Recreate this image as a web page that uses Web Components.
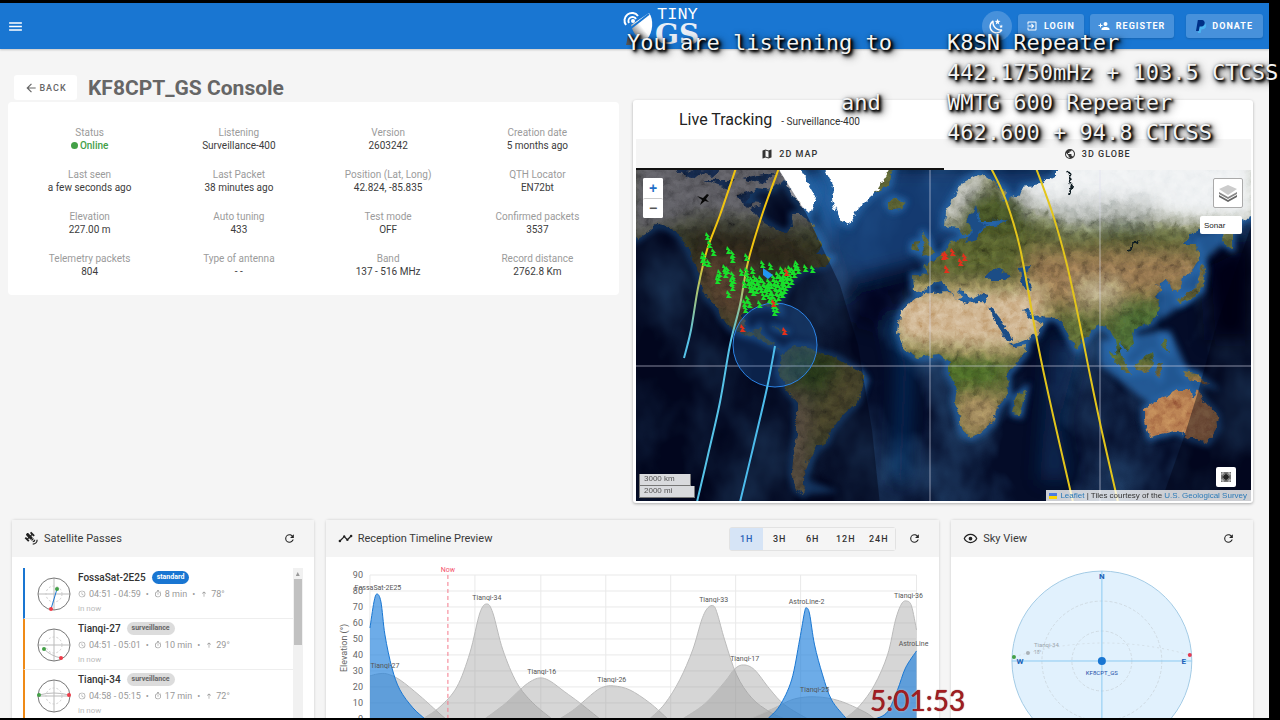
<!DOCTYPE html>
<html lang="en">
<head>
<meta charset="utf-8">
<title>KF8CPT_GS Console - TinyGS</title>
<style>
    * { box-sizing: border-box; }

    body {
        margin: 0;
        height: 100vh;
        padding: 3px 11px 2px 0;
        overflow: hidden;
        background: #000;
        font-family: Roboto, "Liberation Sans", sans-serif;
        font-size: 10px;
        color: #444;
    }
</style>
</head>
<body>
<tgs-app></tgs-app>
<stream-caption></stream-caption>
<stream-clock>5:01:53</stream-clock>

<script>
// Icon paths, 24x24
const ICONS = {
    menu: 'M3,6H21V8H3V6M3,11H21V13H3V11M3,16H21V18H3V16Z',
    back: 'M20,11V13H8L13.5,18.5L12.08,19.92L4.16,12L12.08,4.08L13.5,5.5L8,11H20Z',
    refresh: 'M17.65,6.35C16.2,4.9 14.21,4 12,4A8,8 0 0,0 4,12A8,8 0 0,0 12,20C15.73,20 18.84,17.45 19.73,14H17.65C16.83,16.33 14.61,18 12,18A6,6 0 0,1 6,12A6,6 0 0,1 12,6C13.66,6 15.14,6.69 16.22,7.78L13,11H20V4L17.65,6.35Z',
    map: 'M20.5,3L20.34,3.03L15,5.1L9,3L3.36,4.9C3.15,4.97 3,5.15 3,5.38V20.5A0.5,0.5 0 0,0 3.5,21L3.66,20.97L9,18.9L15,21L20.64,19.1C20.85,19.03 21,18.85 21,18.62V3.5A0.5,0.5 0 0,0 20.5,3M15,19L9,16.89V5L15,7.11V19Z',
    earth: 'M17.9,17.39C17.64,16.59 16.89,16 16,16H15V13A1,1 0 0,0 14,12H8V10H10A1,1 0 0,0 11,9V7H13A2,2 0 0,0 15,5V4.59C17.93,5.77 20,8.64 20,12C20,14.08 19.2,15.97 17.9,17.39M11,19.93C7.05,19.44 4,16.08 4,12C4,11.38 4.08,10.78 4.21,10.21L9,15V16A2,2 0 0,0 11,18M12,2A10,10 0 0,0 2,12A10,10 0 0,0 12,22A10,10 0 0,0 22,12A10,10 0 0,0 12,2Z',
    login: 'M19,3H5C3.89,3 3,3.89 3,5V9H5V5H19V19H5V15H3V19A2,2 0 0,0 5,21H19A2,2 0 0,0 21,19V5C21,3.89 20.1,3 19,3M10.08,15.58L11.5,17L16.5,12L11.5,7L10.08,8.41L12.67,11H3V13H12.67L10.08,15.58Z',
    register: 'M15,14C12.33,14 7,15.33 7,18V20H23V18C23,15.33 17.67,14 15,14M6,10V7H4V10H1V12H4V15H6V12H9V10M15,12A4,4 0 0,0 19,8A4,4 0 0,0 15,4A4,4 0 0,0 11,8A4,4 0 0,0 15,12Z',
    eye: 'M12,9A3,3 0 0,1 15,12A3,3 0 0,1 12,15A3,3 0 0,1 9,12A3,3 0 0,1 12,9M12,4.5C17,4.5 21.27,7.61 23,12C21.27,16.39 17,19.5 12,19.5C7,19.5 2.73,16.39 1,12C2.73,7.61 7,4.5 12,4.5M3.18,12C4.83,15.36 8.24,17.5 12,17.5C15.76,17.5 19.17,15.36 20.82,12C19.17,8.64 15.76,6.5 12,6.5C8.24,6.5 4.83,8.64 3.18,12Z',
    timeline: 'M3,14L3.5,14.07L8.07,9.5C7.89,8.85 8.06,8.11 8.59,7.59C9.37,6.8 10.63,6.8 11.41,7.59C11.94,8.11 12.11,8.85 11.93,9.5L14.5,12.07L15,12C15.18,12 15.35,12 15.5,12.07L19.07,8.5C19,8.35 19,8.18 19,8A2,2 0 0,1 21,6A2,2 0 0,1 23,8A2,2 0 0,1 21,10C20.82,10 20.65,10 20.5,9.93L16.93,13.5C17,13.65 17,13.82 17,14A2,2 0 0,1 15,16A2,2 0 0,1 13,14L13.07,13.5L10.5,10.93C10.18,11 9.82,11 9.5,10.93L4.93,15.5L5,16A2,2 0 0,1 3,18A2,2 0 0,1 1,16A2,2 0 0,1 3,14Z',
    satellite: 'M11.62,1L17.28,6.67L15.16,8.79L13.04,6.67L11.62,8.09L13.95,10.41L12.79,11.58L13.24,12.04C14.17,11.61 15.31,11.77 16.07,12.54L12.54,16.07C11.77,15.31 11.61,14.17 12.04,13.24L11.58,12.79L10.41,13.95L8.09,11.62L6.67,13.04L8.79,15.16L6.67,17.28L1,11.62L3.14,9.5L5.26,11.62L6.67,10.21L3.84,7.38C3.06,6.6 3.06,5.33 3.84,4.55L4.55,3.84C5.33,3.06 6.6,3.06 7.38,3.84L10.21,6.67L11.62,5.26L9.5,3.14L11.62,1M18,14A4,4 0 0,1 14,18V16A2,2 0 0,0 16,14H18M22,14A8,8 0 0,1 14,22V20A6,6 0 0,0 20,14H22Z',
    night: 'M17.75,4.09L15.22,6.03L16.13,9.09L13.5,7.28L10.87,9.09L11.78,6.03L9.25,4.09L12.44,4L13.5,1L14.56,4L17.75,4.09M21.25,11L19.61,12.25L20.2,14.23L18.5,13.06L16.8,14.23L17.39,12.25L15.75,11L17.81,10.95L18.5,9L19.19,10.95L21.25,11M18.97,15.95C19.8,15.87 20.69,17.05 20.16,17.8C19.84,18.25 19.5,18.67 19.08,19.07C15.17,23 8.84,23 4.94,19.07C1.03,15.17 1.03,8.83 4.94,4.93C5.34,4.53 5.76,4.17 6.21,3.85C6.96,3.32 8.14,4.21 8.06,5.04C7.79,7.9 8.75,10.87 10.95,13.06C13.14,15.26 16.1,16.22 18.97,15.95M17.33,17.97C14.5,17.81 11.7,16.64 9.53,14.5C7.36,12.31 6.2,9.5 6.04,6.68C3.23,9.82 3.34,14.64 6.35,17.66C9.37,20.67 14.19,20.78 17.33,17.97Z',
    clock: 'M12,20A8,8 0 0,0 20,12A8,8 0 0,0 12,4A8,8 0 0,0 4,12A8,8 0 0,0 12,20M12,2A10,10 0 0,1 22,12A10,10 0 0,1 12,22C6.47,22 2,17.5 2,12A10,10 0 0,1 12,2M12.5,7V12.25L17,14.92L16.25,16.15L11,13V7H12.5Z',
    timer: 'M12,20A7,7 0 0,1 5,13A7,7 0 0,1 12,6A7,7 0 0,1 19,13A7,7 0 0,1 12,20M19.03,7.39L20.45,5.97C20,5.46 19.55,5 19.04,4.56L17.62,6C16.07,4.74 14.12,4 12,4A9,9 0 0,0 3,13A9,9 0 0,0 12,22C17,22 21,17.97 21,13C21,10.88 20.26,8.93 19.03,7.39M11,14H13V8H11M15,1H9V3H15V1Z',
    up: 'M13,20H11V8L7.5,11.5L6.1,10.1L12,4.2L17.9,10.1L16.5,11.5L13,8V20Z'
};

// Smooth curve through a flat list of x,y pairs
function curve(list) {
    const p = [];
    for (let i = 0; i < list.length; i += 2) p.push([list[i], list[i + 1]]);
    let d = `M${p[0]}`;
    for (let i = 0; i < p.length - 1; i++) {
        const a = p[i - 1] || p[i], b = p[i], c = p[i + 1], e = p[i + 2] || c;
        d += `C${b[0] + (c[0] - a[0]) / 6},${b[1] + (c[1] - a[1]) / 6} ${c[0] - (e[0] - b[0]) / 6},${c[1] - (e[1] - b[1]) / 6} ${c[0]},${c[1]}`;
    }
    return d;
}

class TgsIcon extends HTMLElement {
    connectedCallback() {
        if (this.shadowRoot) return;
        this.attachShadow({ mode: 'open' }).innerHTML = `
            <style>
                :host { display: inline-block; width: var(--icon-size, 14px); height: var(--icon-size, 14px); flex: none; }
                svg { display: block; width: 100%; height: 100%; fill: currentColor; }
            </style>
            <svg viewBox="0 0 24 24" aria-hidden="true"><path d="${ICONS[this.getAttribute('name')]}"/></svg>
        `;
    }
}

class TgsToolbar extends HTMLElement {
    constructor() {
        super();
        this.attachShadow({ mode: 'open' }).innerHTML = `
            <style>
                :host {
                    display: grid;
                    grid-template-columns: 623fr 646fr;
                    align-items: center;
                    height: 46px;
                    background: #1976d2;
                    color: #fff;
                    box-shadow: 0 1px 2px rgba(0, 0, 0, .2);
                }
                button {
                    display: flex;
                    align-items: center;
                    justify-content: center;
                    border: 0;
                    padding: 0;
                    color: #fff;
                    background: rgba(255, 255, 255, .2);
                    font: 700 9px Roboto, sans-serif;
                    letter-spacing: 1px;
                }
                .menu { margin-left: 6px; width: 18px; height: 24px; background: none; --icon-size: 17px; }
                .right { display: flex; align-items: center; padding-right: 6px; }
                .brand { display: flex; align-self: start; height: 38px; }
                .brand > svg { width: 34px; height: 38px; }
                .words { display: flex; flex-direction: column; gap: 2px; padding-top: 2px; }
                .tiny { font: 17px/12px "Liberation Mono", monospace; }
                .gs { font: 700 28px/24px "DejaVu Serif", serif; margin-left: -2px; color: #e8eef6; }
                .actions { display: flex; align-items: center; margin-left: auto; gap: 6px; }
                .round { width: 30px; height: 30px; border-radius: 50%; --icon-size: 17px; }
                .pill { height: 24px; border-radius: 3px; gap: 6px; padding: 0 9px 0 8px; --icon-size: 12px; box-shadow: 0 1px 2px rgba(0, 0, 0, .15); }
                .donate { margin-left: 6px; padding: 0 10px; gap: 5px; }
            </style>
            <div><button class="menu" aria-label="Menu"><tgs-icon name="menu"></tgs-icon></button></div>
            <div class="right">
                <div class="brand">
                    <svg viewBox="0 0 34 38" aria-hidden="true">
                        <defs><linearGradient id="g" x1="1" y1="0" x2="0" y2="1"><stop offset="0" stop-color="#fff"/><stop offset=".5" stop-color="#fff"/><stop offset="1" stop-color="#444"/></linearGradient></defs>
                        <path d="M8,18L26,6C31,12 30,26 24,32C18,35 10,28 8,18Z" fill="url(#g)"/>
                        <path d="M26,7L8,21" stroke="#1976d2" stroke-width="2"/>
                        <path d="M5,29L12,32L8,38H3Z" fill="#555"/>
                        <g fill="none" stroke="#fff" stroke-width="2"><path d="M3,18A7,7 0 1,1 15,9"/><path d="M6,16A4,4 0 1,1 13,12"/></g>
                        <circle cx="10" cy="14" r="2" fill="#fff"/>
                    </svg>
                    <div class="words"><span class="tiny">TINY</span><span class="gs">GS</span></div>
                </div>
                <div class="actions">
                    <button class="round" aria-label="Theme"><tgs-icon name="night"></tgs-icon></button>
                    <button class="pill"><tgs-icon name="login"></tgs-icon>LOGIN</button>
                    <button class="pill"><tgs-icon name="register"></tgs-icon>REGISTER</button>
                    <button class="pill donate">
                        <svg width="11" height="13" viewBox="0 0 12 14" aria-hidden="true"><path d="M4,3H9C12,4 12,10 7,10H6L5,14H2Z" fill="#4ab3f0"/><path d="M2,0H7C11,1 10,7 6,7H4L3,12H0Z" fill="#003087"/></svg>
                        DONATE
                    </button>
                </div>
            </div>
        `;
    }
}

// Label over value, one cell of the station card
class TgsStat extends HTMLElement {
    constructor() {
        super();
        this.attachShadow({ mode: 'open' }).innerHTML = `
            <style>
                :host { display: block; text-align: center; font-size: 10px; line-height: 13px; padding: 8px 0; }
                .label { color: #9b9b9b; }
                .value { color: #3c3c3c; }
            </style>
            <div class="label"><slot name="label"></slot></div>
            <div class="value"><slot></slot></div>
        `;
    }
}

class TgsPanel extends HTMLElement {
    constructor() {
        super();
        this.attachShadow({ mode: 'open' }).innerHTML = `
            <style>
                :host { display: block; background: #fff; border-radius: 3px; box-shadow: 0 0 3px rgba(0, 0, 0, .18); min-width: 0; }
                header { display: flex; align-items: center; height: 37px; padding: 0 18px 0 12px; background: #f4f4f4; color: #222; --icon-size: 15px; }
                h2 { margin: 0 auto 0 5px; font: 400 11px Roboto, sans-serif; color: #3a3a3a; }
                button { display: flex; border: 0; background: none; padding: 0; color: #222; --icon-size: 13px; }
                ::slotted([slot=tools]) { margin-right: 12px; }
            </style>
            <header>
                <tgs-icon name="${this.getAttribute('icon')}"></tgs-icon>
                <h2>${this.getAttribute('heading')}</h2>
                <slot name="tools"></slot>
                <button aria-label="Refresh"><tgs-icon name="refresh"></tgs-icon></button>
            </header>
            <slot></slot>
        `;
    }
}

class TgsPass extends HTMLElement {
    connectedCallback() {
        const a = name => this.getAttribute(name);
        const standard = a('type') === 'standard';
        this.attachShadow({ mode: 'open' }).innerHTML = `
            <style>
                :host { display: flex; height: 51px; padding-left: 12px; border-left: 2px solid ${standard ? '#1976d2' : '#ef8a17'}; border-bottom: 1px solid #eee; }
                .plot { width: 34px; height: 34px; margin: 9px 7px 0 0; flex: none; }
                .name { display: flex; align-items: center; gap: 6px; height: 18px; font-size: 10px; font-weight: 500; color: #333; }
                .chip { font: 700 7px/13px Roboto, sans-serif; padding: 0 5px; border-radius: 7px; background: ${standard ? '#1976d2' : '#dcdcdc'}; color: ${standard ? '#fff' : '#666'}; }
                .meta { display: flex; align-items: center; gap: 3px; height: 15px; font-size: 9px; color: #999; --icon-size: 8px; }
                .meta i { font-style: normal; margin: 0 2px; }
                .when { font-size: 8px; line-height: 16px; color: #bbb; }
            </style>
            <svg class="plot" viewBox="-17 -17 34 34" fill="none" aria-hidden="true">
                <path d="M-16,0H16M0,-16V16" stroke="#bbb"/>
                <circle r="8" stroke="#ccc" stroke-dasharray="2 2"/>
                <circle r="16" stroke="#777"/>
                <path d="${a('path')}" stroke="${standard ? '#1976d2' : '#bbb'}"/>
                <circle cx="${a('rise').split(',')[0]}" cy="${a('rise').split(',')[1]}" r="2" fill="#43a047"/>
                <circle cx="${a('set').split(',')[0]}" cy="${a('set').split(',')[1]}" r="2" fill="#f03b48"/>
            </svg>
            <div>
                <div class="name"><slot></slot><span class="chip">${a('type')}</span></div>
                <div class="meta">
                    <tgs-icon name="clock"></tgs-icon><span>${a('time')}</span><i>•</i>
                    <tgs-icon name="timer"></tgs-icon><span>${a('length')}</span><i>•</i>
                    <tgs-icon name="up"></tgs-icon><span>${a('elevation')}</span>
                </div>
                <div class="when">in now</div>
            </div>
        `;
    }
}

class TgsMap extends HTMLElement {
    constructor() {
        super();
        const land = `M630,165H760L790,172L772,190L757,188L745,202L760,204V218L770,225L778,230L787,234L793,226L792,214L800,214L808,220L816,232L823,246L816,252L832,258L826,266L813,268L800,272L790,282L783,295L779,304L781,313L777,312L774,305L757,307L748,309L743,314L744,328L752,333L760,326L763,336L770,340L775,347L783,352L777,347L768,344L757,338L742,334L730,328L720,315L716,306L707,298L702,285L697,268L690,252L680,235L667,227L657,225L636,240Z
            M783,354L792,345L810,347L817,352L830,355L843,362L860,372L865,380L857,402L843,415L836,424L830,432L827,442L817,448L808,462L802,478L805,488L803,494L796,490L792,474L793,460L797,435L797,402L787,390L778,372Z
            M776,164H798L806,180L816,198L810,214L797,202L787,185Z
            M822,164H894L889,185L872,195L859,208L849,225L841,221L832,200L833,186Z
            M887,203L893,198L904,202L900,209L892,210Z
            M922,231L928,240L933,254L922,256L925,246ZM913,243L919,242L918,251L912,250Z
            M913,275L929,276L925,266L936,259L946,249L950,242L958,240L976,238L984,228L998,225L1008,220L990,221L980,221L978,210L974,222L966,238L958,228L944,226L945,213L963,182L980,173L993,182L1007,192L1004,202L1020,195L1023,187L1040,184L1057,175V166H1260V218L1250,216L1238,222L1232,232V248L1223,242L1226,226L1210,225L1193,232L1183,245L1197,245L1200,258L1193,270L1181,278L1178,292L1173,291L1168,280L1157,285L1163,289L1157,295L1160,308L1153,322L1137,328L1131,332L1134,344L1127,352L1121,343L1118,340L1122,355L1126,366L1118,358L1115,340L1107,328L1097,325L1083,342L1077,350L1070,338L1063,325L1057,318L1037,317L1027,308L1022,310L1030,318L1043,323L1037,335L1013,345L1003,332L993,305L985,303L988,296L978,294L970,298L961,289L958,292L962,298L956,299L945,284L958,296L950,290L941,281L931,283L924,293L914,290Z
            M898,332L900,315L907,305L920,295L930,293L950,292L956,299L967,303L980,302L992,303L1010,342L1013,347L1027,345L1026,352L1007,375L1008,395L997,408L993,422L980,433L970,437L963,432L955,402L957,388L948,372L950,362L940,355L930,356L917,358L905,350Z
            M1025,390L1020,415L1013,413L1015,398Z
            M1145,408L1163,398L1177,390L1190,390L1193,398L1198,389L1203,400L1217,415L1218,428L1207,443L1190,438L1177,430L1150,437L1145,420Z
            M1110,350L1118,356L1132,374L1127,374L1112,358ZM1134,366L1152,353L1154,362L1148,372L1138,371ZM1157,364L1162,363L1160,378L1156,374ZM1183,371L1196,373L1210,385L1200,383L1190,380ZM1162,338L1167,340L1169,352L1164,348ZM1177,300L1186,294L1195,290L1199,275L1203,262L1205,270L1202,290L1190,299L1180,304Z
            M770,326L784,329L790,333L778,330Z`;

        // Ground stations, west to east
        const stations = '708,236 710,244 714,252 704,255 705,262 709,263 729,250 733,254 733,259 747,257 725,268 720,273 718,280 726,274 733,275 732,282 733,287 729,294 742,272 747,271 753,270 763,264 771,266 719,277 703,259 728,270 734,280 745,303 746,309 750,304 748,299 745,284 749,282 752,280 755,285 751,289 748,277 755,278 758,281 761,279 764,283 759,286 762,289 754,292 769,282 772,285 775,282 770,288 767,293 773,295 777,292 780,288 783,286 778,283 774,278 778,275 781,278 784,274 787,271 790,269 793,271 796,267 799,270 806,268 813,269 795,274 791,277 787,280 784,283 789,284 792,281 785,290 783,294 779,297 776,301 774,305 777,309 775,312 770,299 768,288 764,296 760,304 771,292 781,292 788,276 797,264 784,280 766,288 776,287 772,300 786,287 752,286 757,290 782,270'.split(' ');
        const offline = '787,272 774,303 743,328 785,331 944,256 946,255 953,252 965,257 947,269 961,262'.split(' ');
        const dish = (list, colour) => list.map(at => `<path transform="translate(${at})" d="M-2,-4L2,1H0L3,4H-3L-1,0H-3Z" fill="${colour}"/>`).join('');

        this.attachShadow({ mode: 'open' }).innerHTML = `
            <style>
                * { box-sizing: border-box; }
                :host { display: block; position: relative; height: 331px; overflow: hidden; background: #03091c; font-family: "Liberation Sans", Arial, sans-serif; }
                .world { display: block; width: 100%; height: 100%; }
                .zoom, .layers, .full { position: absolute; background: #fff; border-radius: 2px; }
                button { display: block; border: 0; padding: 0; background: #fff; border-radius: 2px; }
                .zoom { left: 7px; top: 8px; width: 20px; }
                .zoom button { width: 20px; height: 20px; font: 700 14px/19px "Liberation Sans", sans-serif; color: #1e6fc8; }
                .zoom button + button { color: #555; border-top: 1px solid #ccc; }
                .layers { right: 8px; top: 8px; width: 30px; height: 30px; border: 1px solid #aaa; padding: 3px; }
                .sonar { position: absolute; right: 9px; top: 46px; width: 42px; height: 18px; text-align: left; padding-left: 4px; font: 8px "Liberation Sans", sans-serif; color: #222; }
                .full { right: 15px; bottom: 14px; width: 20px; height: 20px; padding: 5px; }
                .scale { position: absolute; left: 3px; bottom: 3px; font-size: 8px; line-height: 10px; color: #555; }
                .scale div { width: 56px; height: 12px; padding-left: 4px; background: rgba(255, 255, 255, .85); border: 1px solid #777; border-top: 0; }
                .scale div:first-child { width: 52px; }
                .credit { position: absolute; right: 0; bottom: 0; display: flex; align-items: center; gap: 3px; height: 11px; padding: 0 4px 0 3px; background: rgba(255, 255, 255, .8); font-size: 8px; color: #333; white-space: pre; }
                a { color: #2a7ab8; text-decoration: none; }
            </style>
            <svg class="world" viewBox="636 170 615 331" preserveAspectRatio="xMidYMid slice" role="img" aria-label="Satellite tracks over the world">
                <defs>
                    <clipPath id="land"><path d="${land}"/></clipPath>
                    <filter id="blur" x="-30%" y="-30%" width="160%" height="160%"><feGaussianBlur stdDeviation="9"/></filter>
                    <filter id="shelf"><feGaussianBlur stdDeviation="3"/></filter>
                    <filter id="coast" x="0" y="0" width="100%" height="100%"><feTurbulence type="fractalNoise" baseFrequency=".14" numOctaves="3" seed="4"/><feDisplacementMap in="SourceGraphic" scale="7" xChannelSelector="R" yChannelSelector="G"/></filter>
                    <filter id="relief" x="0" y="0" width="100%" height="100%"><feTurbulence type="fractalNoise" baseFrequency=".11" numOctaves="5" seed="8"/><feColorMatrix values="1 0 0 0 -.06  1 0 0 0 -.06  1 0 0 0 -.06  0 0 0 0 .5"/></filter>
                    <filter id="deep" x="0" y="0" width="100%" height="100%"><feTurbulence type="fractalNoise" baseFrequency=".014 .01" numOctaves="4" seed="21"/><feColorMatrix values="0 0 0 0 .06  0 0 0 0 .22  0 0 0 0 .48  2 0 0 0 -.75"/></filter>
                    <linearGradient id="fade" gradientUnits="userSpaceOnUse" x1="0" y1="250" x2="0" y2="340"><stop offset="0" stop-color="#f1c40f"/><stop offset="1" stop-color="#56c3e8"/></linearGradient>
                </defs>
                <rect x="636" y="169" width="615" height="333" fill="#040c28"/>
                <rect x="636" y="169" width="615" height="333" filter="url(#deep)" opacity=".6"/>
                <g filter="url(#blur)">
                    <path d="M810,168H1060V230L960,240L910,265L850,280L820,225Z" fill="#174f8e" opacity=".7"/>
                    <path d="M795,172H830L840,222L825,240Z" fill="#2262a4"/>
                    <path d="M815,230L840,290" stroke="#3a6ba4" stroke-width="10"/>
                    <path d="M1200,225H1251V170Z" fill="#255c9c"/>
                    <path d="M1050,340H1080L1060,420L1070,480H1040Z" fill="#123f78" opacity=".5"/>
                    <path d="M895,320L905,370L900,480" stroke="#164a88" stroke-width="12" fill="none" opacity=".6"/>
                    <path d="M860,285L900,290L890,330L850,320Z" fill="#000618" opacity=".7"/>
                    <path d="M1205,262L1251,240V340L1210,340Z" fill="#000412"/>
                </g>
                <path d="${land}" fill="none" stroke="#2868aa" stroke-width="6" filter="url(#shelf)"/>
                <path d="M1100,340L1170,330L1190,375L1198,392L1150,405L1100,365ZM1160,280L1203,262L1190,300L1160,320ZM1190,235L1225,228L1222,245L1203,262L1195,250ZM803,440L815,452L808,480L840,492L803,495Z" fill="#2a6bad" filter="url(#shelf)" opacity=".8"/>
                <g filter="url(#coast)">
                    <g clip-path="url(#land)">
                        <rect x="630" y="160" width="630" height="345" fill="#4e542c"/>
                        <g filter="url(#blur)">
                            <path d="M630,150H830V225L760,220L700,215L630,240Z" fill="#8f8e8c"/>
                            <path d="M690,228L790,235L835,270L750,270L690,260Z" fill="#40371c"/>
                            <path d="M700,260H745L760,320L725,320L700,290Z" fill="#7a5c38"/>
                            <path d="M750,268H800L780,308H748Z" fill="#44502a"/>
                            <path d="M790,350L850,360L840,395L790,385Z" fill="#39531e"/>
                            <path d="M845,360L870,380L830,440L805,430Z" fill="#665f30"/>
                            <path d="M788,390L806,400V500H788Z" fill="#86705a"/>
                            <path d="M1010,150H1260V225L1180,222L1120,212L1080,225L1040,212L1010,195Z" fill="#eceff1"/>
                            <path d="M1040,200H1160L1150,228H1060Z" fill="#939a94" opacity=".7"/>
                            <path d="M942,225L958,190L990,168" stroke="#f0f0f0" stroke-width="12" fill="none"/>
                            <path d="M960,190H1030V235H960Z" fill="#3d4824"/>
                            <path d="M935,235H1030V270H935Z" fill="#4b5328"/>
                            <path d="M1030,250H1200V285L1140,300L1080,308L1020,300Z" fill="#7d6342"/>
                            <path d="M1100,222H1150V242H1105Z" fill="#3f4a28"/>
                            <path d="M1075,282H1120L1118,305H1080Z" fill="#ab9674"/>
                            <path d="M885,288H1045V342L1010,350L895,344Z" fill="#c7a67b"/>
                            <path d="M905,352H1010L995,392H945Z" fill="#415a22"/>
                            <path d="M955,395H1005L995,435H960Z" fill="#8d7450"/>
                            <path d="M1120,297H1165V360H1100Z" fill="#3f5a2c"/>
                            <path d="M1060,310H1095V350H1070Z" fill="#515e2e"/>
                            <path d="M1130,380H1225V450H1130Z" fill="#a96c44"/>
                        </g>
                        <path d="M820,160H896L874,195L850,228L834,215L825,190ZM776,160H804L818,198L810,216L788,190Z" fill="#fff"/>
                        <g fill="#1f3c63"><path d="M672,168L690,180L700,172ZM704,180H735L728,188ZM736,196L752,190L760,200L748,208ZM742,178L775,172L765,184ZM762,206L786,196L780,220L770,228ZM690,170L712,176L722,168ZM750,208L764,204L776,228L764,222ZM778,186L792,200L796,212L786,206Z"/></g>
                        <rect x="630" y="160" width="630" height="345" filter="url(#relief)" style="mix-blend-mode: overlay"/>
                    </g>
                    <g fill="#1c4d86"><path d="M985,277L993,268L1003,271L1012,276L1004,281L990,281Z"/><path d="M1020,268L1030,267L1026,275L1032,288L1026,291L1021,278Z"/><path d="M990,306L1002,322L1012,340L1007,340L994,320Z"/><path d="M966,242L973,230L967,222L975,205L979,222L990,224L980,228L976,239Z"/></g>
                    <path d="M1068,172L1072,185L1069,196M1137,240L1128,252" stroke="#101c22" stroke-width="2" fill="none"/>
                </g>
                <path d="M630,160H773L806,213L840,285L858,345L872,430L880,505H630ZM1255,215L1215,330L1198,392L1184,437L1160,505H1255Z" fill="#000010" opacity=".42"/>
                <path d="M636,366H1251M930,169V502M1100,169V502" stroke="#dde" opacity=".6"/>
                <circle cx="775" cy="345" r="42" fill="#2f86e8" fill-opacity=".22" stroke="#2b83e6" stroke-width="1"/>
                <g fill="none" stroke-width="2">
                    <path d="${curve([736, 168, 720, 215, 707, 250, 698, 288, 691, 330, 684, 358])}" stroke="url(#fade)"/>
                    <path d="${curve([779, 168, 763, 212, 748, 262, 740, 305, 730, 345, 720, 402, 708, 455, 697, 502])}" stroke="url(#fade)"/>
                    <path d="${curve([775, 346, 767, 388, 753, 448, 740, 502])}" stroke="#4dbcec"/>
                    <path d="${curve([991, 168, 1005, 198, 1020, 248, 1038, 345, 1053, 415, 1073, 502])}" stroke="#e3c51b"/>
                    <path d="${curve([1036, 168, 1053, 215, 1067, 265, 1080, 325, 1090, 375, 1102, 432, 1118, 502])}" stroke="#e3c51b"/>
                </g>
                ${dish(stations, '#19e02c')}${dish(offline, '#e3301c')}
                <path d="M763,268L773,275L768,279L763,275Z" fill="#2196f3"/>
                <path d="M697,196L703,198L707,194L709,195L706,199L709,202L705,201L700,205L702,200Z" fill="#080808"/>
            </svg>
            <div class="zoom"><button aria-label="Zoom in">+</button><button aria-label="Zoom out">−</button></div>
            <button class="layers" aria-label="Layers"><svg viewBox="0 0 22 22" width="22" height="22" fill="#888"><path d="M2,13L11,18L20,13V15L11,20L2,15Z" fill="#666"/><path d="M2,10L11,15L20,10V12L11,17L2,12Z" fill="#888"/><path d="M2,7L11,3L20,7L11,13Z" fill="#ccc"/></svg></button>
            <button class="sonar">Sonar</button>
            <button class="full" aria-label="Full screen"><svg style="display:block" viewBox="0 0 10 10" width="10" height="10"><path d="M0,0H10V10H0Z" fill="#777"/><path d="M5,1L6,3H7V4L9,5L7,6V7H6L5,9L4,7H3V6L1,5L3,4V3H4Z" fill="#222"/><path d="M1,3V1H3M7,1H9V3M9,7V9H7M3,9H1V7" stroke="#ccc" fill="none"/></svg></button>
            <div class="scale"><div>3000 km</div><div>2000 mi</div></div>
            <div class="credit"><svg width="8" height="6" viewBox="0 0 8 6"><path d="M0,0H8V3H0Z" fill="#4c7be1"/><path d="M0,3H8V6H0Z" fill="#ffd500"/></svg><span><a href="#">Leaflet</a> | Tiles courtesy of the <a href="#">U.S. Geological Survey</a></span></div>
        `;
    }
}

class TgsTimeline extends HTMLElement {
    constructor() {
        super();
        const blue = { fill: '#1e80dc', opacity: '.65', line: '#1976d2' };
        const grey = { fill: '#999', opacity: '.4', line: '#bbb' };
        // name, label x, label y, style, curve
        const passes = [
            ['Tianqi-27', 385, 668, grey, [370, 676, 378, 674, 387, 674, 400, 680, 420, 696, 440, 714, 446, 719]],
            ['Tianqi-34', 487, 600, grey, [423, 719, 440, 707, 457, 687, 470, 653, 480, 613, 487, 604, 493, 613, 503, 650, 517, 683, 533, 703, 552, 719]],
            ['Tianqi-16', 542, 674, grey, [485, 719, 505, 704, 520, 690, 530, 682, 540, 678, 550, 681, 565, 692, 580, 703, 600, 719]],
            ['Tianqi-26', 612, 682, grey, [560, 719, 575, 709, 595, 692, 604, 687, 614, 686, 630, 690, 650, 703, 668, 719]],
            ['Tianqi-33', 714, 602, grey, [650, 719, 665, 704, 680, 680, 693, 650, 702, 620, 708, 608, 714, 606, 718, 615, 725, 640, 737, 675, 752, 698, 770, 712, 785, 719]],
            ['Tianqi-17', 745, 661, grey, [683, 719, 705, 704, 725, 682, 735, 669, 744, 665, 755, 670, 770, 689, 785, 705, 808, 719]],
            ['Tianqi-25', 815, 692, grey, [750, 719, 775, 708, 795, 699, 817, 697, 840, 701, 865, 712, 875, 719]],
            ['Tianqi-36', 909, 598, grey, [845, 719, 860, 706, 875, 685, 888, 655, 896, 620, 902, 604, 907, 601, 912, 606, 917, 630]],
            ['FossaSat-2E25', 378, 590, blue, [370, 628, 374, 602, 377, 594, 381, 602, 385, 635, 392, 668, 400, 690, 413, 708, 425, 719]],
            ['AstroLine-2', 807, 604, blue, [768, 719, 780, 706, 792, 680, 800, 640, 805, 612, 807, 608, 810, 614, 815, 645, 823, 675, 832, 700, 847, 719]],
            ['AstroLine', 914, 646, blue, [876, 719, 888, 712, 898, 690, 906, 668, 917, 651]]
        ];
        const rows = [0, 10, 20, 30, 40, 50, 60, 70, 80, 90];
        this.attachShadow({ mode: 'open' }).innerHTML = `
            <style>
                :host { display: block; }
                svg { display: block; width: 100%; font-family: Roboto, sans-serif; font-size: 7px; }
                .axis { font-size: 9px; fill: #666; }
            </style>
            <svg viewBox="326 557 614 183" role="img" aria-label="Elevation over time">
                <g stroke="#e9e9e9">
                    ${rows.map(v => `<path d="M370,${719 - v * 1.6}H917"/>`).join('')}
                    ${[370, 475, 541, 606, 671, 736, 801, 917].map(x => `<path d="M${x},575V719"/>`).join('')}
                </g>
                <g class="axis" text-anchor="end">${rows.map(v => `<text x="363" y="${Math.round(722 - v * 1.6)}">${v}</text>`).join('')}</g>
                <text class="axis" text-anchor="middle" transform="translate(347 648) rotate(-90)">Elevation (°)</text>
                ${passes.map(([, , , style, points]) => `
                    <path d="${curve(points)}V719H${points[0]}Z" fill="${style.fill}" fill-opacity="${style.opacity}"/>
                    <path d="${curve(points)}" fill="none" stroke="${style.line}"/>
                `).join('')}
                <path d="M448,575V719" stroke="#f4798c" stroke-dasharray="4 3"/>
                <text x="448" y="572" text-anchor="middle" fill="#f4516c">Now</text>
                <g text-anchor="middle" fill="#555">${passes.map(p => `<text x="${p[1]}" y="${p[2]}">${p[0]}</text>`).join('')}</g>
            </svg>
        `;
    }
}

class TgsSky extends HTMLElement {
    constructor() {
        super();
        this.attachShadow({ mode: 'open' }).innerHTML = `
            <style>
                :host { display: block; }
                svg { display: block; width: 100%; height: 200px; font-family: Roboto, sans-serif; }
            </style>
            <svg viewBox="951 557 302 200" text-anchor="middle" role="img" aria-label="Sky view">
                <circle cx="1102" cy="661" r="90" fill="#e1f1fd" stroke="#a3cbe5"/>
                <g fill="none" stroke="#cfdae2" stroke-dasharray="3 2"><circle cx="1102" cy="661" r="60"/><circle cx="1102" cy="661" r="30"/></g>
                <path d="M1014,657Q1100,630 1190,655" fill="none" stroke="#d2dde5" stroke-dasharray="2 3"/>
                <path d="M1012,661H1192M1102,571V751" stroke="#8ccaf2"/>
                <circle cx="1102" cy="661" r="4" fill="#1976d2"/>
                <circle cx="1014" cy="657" r="2" fill="#43a047"/><circle cx="1190" cy="655" r="2" fill="#e53950"/>
                <circle cx="1028" cy="653" r="2" fill="#aab2b8"/>
                <g font-size="8" font-weight="700" fill="#1d62b8"><text x="1102" y="579">N</text><text x="1020" y="664">W</text><text x="1184" y="664">E</text></g>
                <text x="1102" y="675" font-size="6" fill="#1d4fa8">KF8CPT_GS</text>
                <g fill="#9aa4ab" text-anchor="start"><text x="1034" y="647" font-size="6">Tianqi-34</text><text x="1034" y="654" font-size="5">18°</text></g>
            </svg>
        `;
    }
}

class TgsApp extends HTMLElement {
    constructor() {
        super();
        const stats = [
            ['Status', '<b class="online">Online</b>'], ['Listening', 'Surveillance-400'], ['Version', '2603242'], ['Creation date', '5 months ago'],
            ['Last seen', 'a few seconds ago'], ['Last Packet', '38 minutes ago'], ['Position (Lat, Long)', '42.824, -85.835'], ['QTH Locator', 'EN72bt'],
            ['Elevation', '227.00 m'], ['Auto tuning', '433'], ['Test mode', 'OFF'], ['Confirmed packets', '3537'],
            ['Telemetry packets', '804'], ['Type of antenna', '- -'], ['Band', '137 - 516 MHz'], ['Record distance', '2762.8 Km']
        ];
        this.attachShadow({ mode: 'open' }).innerHTML = `
            <style>
                * { box-sizing: border-box; }
                :host { display: block; height: 100%; overflow: hidden; background: #f5f5f5; }
                main { padding: 26px 16px 0 8px; }
                button { font: 500 9px Roboto, sans-serif; letter-spacing: 1px; border: 0; color: #333; }
                .title { display: flex; align-items: center; height: 25px; padding-left: 6px; gap: 11px; }
                .title button { display: flex; align-items: center; justify-content: center; gap: 1px; width: 63px; height: 25px; padding: 0; background: #fff; border-radius: 3px; color: #666; --icon-size: 14px; }
                h1 { margin: 0; font: 700 21px/24px Roboto, sans-serif; color: #666; }
                .top { display: grid; grid-template-columns: 611fr 620fr; gap: 14px; align-items: start; }
                .stats { display: grid; grid-template-columns: repeat(4, 1fr); margin-top: 2px; padding: 16px 7px 9px; background: #fff; border-radius: 4px; }
                .online { color: #43a047; font-weight: 500; }
                .online::before { content: ""; display: inline-block; width: 7px; height: 7px; margin-right: 2px; border-radius: 50%; background: #43a047; }
                .live { background: #fff; padding: 0 2px 2px 3px; border-radius: 3px; box-shadow: 0 1px 3px rgba(0, 0, 0, .3); }
                .live header { display: flex; align-items: baseline; gap: 9px; height: 39px; padding: 9px 0 0 43px; }
                .live h2 { margin: 0; font: 400 16px/21px Roboto, sans-serif; color: #222; }
                .live header span { font-size: 10px; color: #333; }
                .tabs { display: grid; grid-template-columns: 1fr 1fr; height: 31px; background: #f5f5f5; }
                .tabs button { display: flex; align-items: center; justify-content: center; gap: 6px; background: none; border-bottom: 2px solid transparent; --icon-size: 12px; }
                .tabs button[aria-selected=true] { border-color: #111; }
                .bottom { display: grid; grid-template-columns: 302fr 614fr 302fr; gap: 12px; margin: 17px 0 0 4px; }
                .passes { display: flex; margin: 11px; }
                .passes > div:first-child { flex: 1; }
                .bar { width: 10px; background: #f1f1f1; }
                .bar i { display: block; margin: 0 1px; height: 66px; background: #c1c1c1; }
                .bar::before { content: ""; display: block; margin: 4px auto 3px; width: 4px; height: 4px; background: #999; clip-path: polygon(50% 0, 100% 100%, 0 100%); }
                .range { display: flex; border: 1px solid #e2e2e2; border-radius: 3px; }
                .range button { width: 33px; height: 22px; padding: 0; background: #f5f5f5; }
                .range button:first-child { background: #d6e4f6; color: #2a62b8; }
            </style>
            <tgs-toolbar></tgs-toolbar>
            <main>
                <div class="title"><button><tgs-icon name="back"></tgs-icon>BACK</button><h1>KF8CPT_GS Console</h1></div>
                <div class="top">
                    <section class="stats">${stats.map(s => `<tgs-stat><span slot="label">${s[0]}</span>${s[1]}</tgs-stat>`).join('')}</section>
                    <section class="live">
                        <header><h2>Live Tracking</h2><span>- Surveillance-400</span></header>
                        <div class="tabs" role="tablist">
                            <button role="tab" aria-selected="true"><tgs-icon name="map"></tgs-icon>2D MAP</button>
                            <button role="tab" aria-selected="false"><tgs-icon name="earth"></tgs-icon>3D GLOBE</button>
                        </div>
                        <tgs-map></tgs-map>
                    </section>
                </div>
                <div class="bottom">
                    <tgs-panel icon="satellite" heading="Satellite Passes">
                        <div class="passes">
                            <div>
                                <tgs-pass type="standard" time="04:51 - 04:59" length="8 min" elevation="78°" rise="3,-5" set="-3,15" path="M3,-5L-3,15">FossaSat-2E25</tgs-pass>
                                <tgs-pass type="surveillance" time="04:51 - 05:01" length="10 min" elevation="29°" rise="-10,4" set="7,13" path="M-10,4Q-3,11 7,13">Tianqi-27</tgs-pass>
                                <tgs-pass type="surveillance" time="04:58 - 05:15" length="17 min" elevation="72°" rise="-15,-1" set="15,-1" path="M-15,-1Q0,-5 15,-1">Tianqi-34</tgs-pass>
                            </div>
                            <div class="bar"><i></i></div>
                        </div>
                    </tgs-panel>
                    <tgs-panel icon="timeline" heading="Reception Timeline Preview">
                        <div class="range" slot="tools"><button>1H</button><button>3H</button><button>6H</button><button>12H</button><button>24H</button></div>
                        <tgs-timeline></tgs-timeline>
                    </tgs-panel>
                    <tgs-panel icon="eye" heading="Sky View"><tgs-sky></tgs-sky></tgs-panel>
                </div>
            </main>
        `;
    }
}

// Text burned over the stream
class StreamCaption extends HTMLElement {
    constructor() {
        super();
        this.attachShadow({ mode: 'open' }).innerHTML = `
            <style>
                :host {
                    position: absolute;
                    left: 627px;
                    top: 28px;
                    right: 0;
                    overflow: hidden;
                    display: grid;
                    grid-template-columns: 320px auto;
                    grid-auto-rows: 30px;
                    font: 22px/30px "DejaVu Sans Mono", monospace;
                    color: #f4f4f4;
                    white-space: nowrap;
                    text-shadow: 1px 1px 2px #000, 2px 2px 3px #000, 2px 2px 5px #000, 4px 3px 8px rgba(0, 0, 0, .8);
                }
                span { justify-self: start; }
                .freq { grid-column: 2; }
                .and { margin-left: 214px; }
            </style>
            <span>You are listening to</span><span>K8SN Repeater</span>
            <span class="freq">442.1750mHz + 103.5 CTCSS</span>
            <span class="and">and</span><span>WMTG 600 Repeater</span>
            <span class="freq">462.600 + 94.8 CTCSS</span>
        `;
    }
}

class StreamClock extends HTMLElement {
    constructor() {
        super();
        this.attachShadow({ mode: 'open' }).innerHTML = `
            <style>
                :host { position: absolute; left: 870px; bottom: 2px; font: 28px/36px Lato, sans-serif; color: #a31d22; text-shadow: 0 0 1px #500, 0 0 2px #fff; }
            </style>
            <slot></slot>
        `;
    }
}

customElements.define('tgs-icon', TgsIcon);
customElements.define('tgs-toolbar', TgsToolbar);
customElements.define('tgs-stat', TgsStat);
customElements.define('tgs-panel', TgsPanel);
customElements.define('tgs-pass', TgsPass);
customElements.define('tgs-map', TgsMap);
customElements.define('tgs-timeline', TgsTimeline);
customElements.define('tgs-sky', TgsSky);
customElements.define('tgs-app', TgsApp);
customElements.define('stream-caption', StreamCaption);
customElements.define('stream-clock', StreamClock);
</script>
</body>
</html>
